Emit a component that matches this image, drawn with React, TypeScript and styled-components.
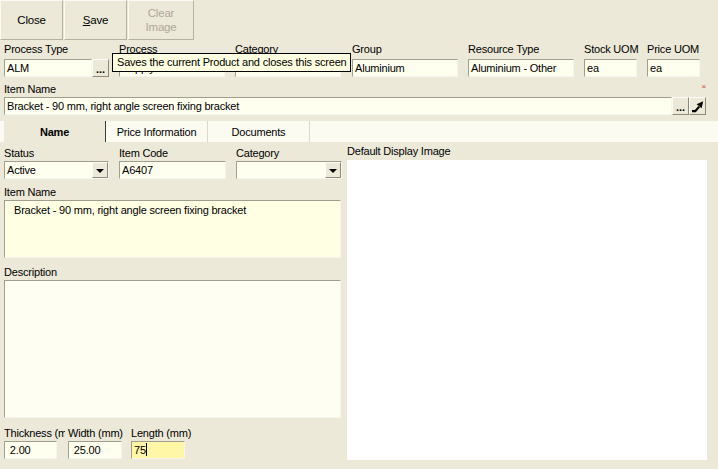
import React from "react";
import styled, { createGlobalStyle } from "styled-components";

const Global = createGlobalStyle`
  html, body { margin: 0; padding: 0; background: #ECE9D8; }
  body {
    font-family: "Liberation Sans", Arial, sans-serif;
    font-size: 11px;
    letter-spacing: -0.2px;
    color: #000;
  }
`;

const Page = styled.div`
  width: 718px;
  height: 469px;
  overflow: hidden;
  background: #ECE9D8;
  display: flex;
  flex-direction: column;
`;

const Toolbar = styled.div`
  display: flex;
  gap: 1px;
  height: 40px;
`;

const ToolButton = styled.div<{ $w: number; $disabled?: boolean }>`
  width: ${(p) => p.$w}px;
  height: 40px;
  box-sizing: border-box;
  border: 1px solid;
  border-color: #fbfaf6 #b5b1a1 #b5b1a1 #fbfaf6;
  display: flex;
  align-items: center;
  justify-content: center;
  text-align: center;
  line-height: 14px;
  font-size: 11.5px;
  color: ${(p) => (p.$disabled ? "#aca899" : "#000")};
`;

const HeaderRow = styled.div`
  position: relative;
  display: flex;
  gap: 10px;
  padding: 2px 0 0 4px;
`;

const Field = styled.div<{ $w: number; $ml?: number }>`
  width: ${(p) => p.$w}px;
  margin-left: ${(p) => p.$ml || 0}px;
  display: flex;
  flex-direction: column;
  flex-shrink: 0;
`;

const Label = styled.div<{ $clip?: boolean }>`
  height: 15px;
  line-height: 15px;
  white-space: nowrap;
  overflow: ${(p) => (p.$clip ? "hidden" : "visible")};
  ${(p) => (p.$clip ? "width: calc(100% - 3px);" : "")}
`;

const LabelTop = styled(Label)`
  margin-bottom: 2px;
`;

const TextBox = styled.div<{ $w?: number; $bg?: string }>`
  box-sizing: border-box;
  height: 18px;
  ${(p) => (p.$w ? `width: ${p.$w}px;` : "flex: 1;")}
  min-width: 0;
  background: ${(p) => p.$bg || "#FFFFF0"};
  border: 1px solid;
  border-color: #a19e8f #f6f5ef #f6f5ef #a19e8f;
  padding: 0 2px;
  line-height: 16px;
  white-space: nowrap;
  overflow: hidden;
`;

const InputGroup = styled.div`
  display: flex;
  height: 18px;
`;

const SideButton = styled.div<{ $icon?: boolean }>`
  box-sizing: border-box;
  width: 17px;
  height: 18px;
  flex-shrink: 0;
  background: #ECE9D8;
  border: 1px solid;
  border-color: #fdfcf8 #8d8a7c #8d8a7c #fdfcf8;
  display: flex;
  align-items: center;
  justify-content: center;
  font-weight: bold;
  font-size: 11px;
  letter-spacing: 0;
  line-height: 1;
  padding-top: ${(p) => (p.$icon ? 0 : 2)}px;
`;

const Tooltip = styled.div`
  position: absolute;
  left: 112px;
  top: 13px;
  box-sizing: border-box;
  height: 19px;
  line-height: 17px;
  padding: 0 4px;
  border: 1px solid #000;
  background: #FFFFE1;
  white-space: nowrap;
  z-index: 5;
`;

const NameBlock = styled.div`
  display: flex;
  flex-direction: column;
  padding: 5px 12px 0 4px;
`;

const LabelRow = styled.div`
  display: flex;
  justify-content: space-between;
  align-items: flex-start;
  height: 15px;
  line-height: 15px;
`;

const Required = styled.span`
  color: #d43c3c;
  font-size: 8px;
  line-height: 8px;
  margin: 1px 0 0;
`;

const TabStrip = styled.div`
  margin-top: 6px;
  height: 21px;
  background: #FCFBF1;
  display: flex;
  padding-left: 4px;
`;

const Tab = styled.div<{ $active?: boolean }>`
  box-sizing: border-box;
  width: 102px;
  height: 21px;
  display: flex;
  align-items: center;
  justify-content: center;
  background: ${(p) => (p.$active ? "#ECE9D8" : "transparent")};
  font-weight: ${(p) => (p.$active ? "bold" : "normal")};
  border-right: 1px solid ${(p) => (p.$active ? "#3c3c3c" : "#ddd9c8")};
  padding-top: 1px;
`;

const TabBody = styled.div`
  display: flex;
  gap: 6px;
  padding: 2px 0 0 4px;
`;

const LeftCol = styled.div`
  width: 337px;
  display: flex;
  flex-direction: column;
  padding-top: 2px;
`;

const FieldRow = styled.div<{ $mt?: number; $gap?: number }>`
  display: flex;
  gap: ${(p) => p.$gap ?? 10}px;
  margin-top: ${(p) => p.$mt || 0}px;
`;

const Combo = styled.div<{ $w: number }>`
  box-sizing: border-box;
  width: ${(p) => p.$w}px;
  height: 18px;
  display: flex;
  align-items: center;
  background: #FFFFF0;
  border: 1px solid;
  border-color: #a19e8f #f6f5ef #f6f5ef #a19e8f;
`;

const ComboText = styled.div`
  flex: 1;
  padding-left: 2px;
  line-height: 16px;
  white-space: nowrap;
  overflow: hidden;
`;

const DropButton = styled.div`
  box-sizing: border-box;
  width: 16px;
  height: 16px;
  background: #ECE9D8;
  border: 1px solid;
  border-color: #fdfcf8 #8d8a7c #8d8a7c #fdfcf8;
  display: flex;
  align-items: center;
  justify-content: center;
  &::after {
    content: "";
    border-left: 4px solid transparent;
    border-right: 4px solid transparent;
    border-top: 4px solid #000;
    margin-top: 1px;
  }
`;

const BlockLabel = styled(Label)<{ $mt: number }>`
  margin-top: ${(p) => p.$mt}px;
`;

const TextArea = styled.div<{ $h: number; $bg: string }>`
  box-sizing: border-box;
  height: ${(p) => p.$h}px;
  background: ${(p) => p.$bg};
  border: 1px solid;
  border-color: #a19e8f #f6f5ef #f6f5ef #a19e8f;
  padding: 2px 9px;
  line-height: 14px;
`;

const RightCol = styled.div`
  width: 360px;
  display: flex;
  flex-direction: column;
`;

const ImageBox = styled.div`
  height: 300px;
  background: #fff;
  margin-top: 1px;
`;

const Caret = styled.span`
  display: inline-block;
  width: 1px;
  height: 13px;
  background: #000;
  vertical-align: -2px;
`;

const ArrowIcon = () => (
  <svg width="13" height="13" viewBox="0 0 13 13">
    <path
      d="M1 11.2 L4.2 11.2 L8.2 6.6"
      stroke="#000"
      strokeWidth="2.2"
      fill="none"
      strokeLinejoin="round"
    />
    <polygon points="5.6,4.2 12.2,1.2 10.6,8.2" fill="#000" />
  </svg>
);

export default function App() {
  return (
    <Page>
      <Global />
      <Toolbar>
        <ToolButton $w={63}>Close</ToolButton>
        <ToolButton $w={63}>
          <span>
            <u>S</u>ave
          </span>
        </ToolButton>
        <ToolButton $w={66} $disabled>
          Clear
          <br />
          Image
        </ToolButton>
      </Toolbar>

      <HeaderRow>
        <Field $w={105}>
          <LabelTop>Process Type</LabelTop>
          <InputGroup>
            <TextBox>ALM</TextBox>
            <SideButton>...</SideButton>
          </InputGroup>
        </Field>
        <Field $w={106}>
          <LabelTop>Process</LabelTop>
          <TextBox>Supply</TextBox>
        </Field>
        <Field $w={106}>
          <LabelTop>Category</LabelTop>
          <TextBox />
        </Field>
        <Field $w={106} $ml={1}>
          <LabelTop>Group</LabelTop>
          <TextBox>Aluminium</TextBox>
        </Field>
        <Field $w={106}>
          <LabelTop>Resource Type</LabelTop>
          <TextBox>Aluminium - Other</TextBox>
        </Field>
        <Field $w={53}>
          <LabelTop>Stock UOM</LabelTop>
          <TextBox>ea</TextBox>
        </Field>
        <Field $w={53}>
          <LabelTop>Price UOM</LabelTop>
          <TextBox>ea</TextBox>
        </Field>
        <Tooltip>Saves the current Product and closes this screen</Tooltip>
      </HeaderRow>

      <NameBlock>
        <LabelRow>
          <span>Item Name</span>
          <Required>×</Required>
        </LabelRow>
        <InputGroup>
          <TextBox>Bracket - 90 mm, right angle screen fixing bracket</TextBox>
          <SideButton>...</SideButton>
          <SideButton $icon>
            <ArrowIcon />
          </SideButton>
        </InputGroup>
      </NameBlock>

      <TabStrip>
        <Tab $active>Name</Tab>
        <Tab>Price Information</Tab>
        <Tab>Documents</Tab>
      </TabStrip>

      <TabBody>
        <LeftCol>
          <FieldRow>
            <Field $w={105}>
              <Label>Status</Label>
              <Combo $w={105}>
                <ComboText>Active</ComboText>
                <DropButton />
              </Combo>
            </Field>
            <Field $w={107}>
              <Label>Item Code</Label>
              <TextBox>A6407</TextBox>
            </Field>
            <Field $w={106}>
              <Label>Category</Label>
              <Combo $w={106}>
                <ComboText />
                <DropButton />
              </Combo>
            </Field>
          </FieldRow>

          <BlockLabel $mt={6}>Item Name</BlockLabel>
          <TextArea $h={58} $bg="#FFFFE4">
            Bracket - 90 mm, right angle screen fixing bracket
          </TextArea>

          <BlockLabel $mt={7}>Description</BlockLabel>
          <TextArea $h={138} $bg="#FEFEF2" />

          <FieldRow $mt={8} $gap={0}>
            <Field $w={64}>
              <Label $clip>Thickness (mm)</Label>
              <TextBox $w={53}>&nbsp;2.00</TextBox>
            </Field>
            <Field $w={63}>
              <Label>Width (mm)</Label>
              <TextBox $w={54}>&nbsp;25.00</TextBox>
            </Field>
            <Field $w={64}>
              <Label>Length (mm)</Label>
              <TextBox $w={54} $bg="#FFF7A6">
                75
                <Caret />
              </TextBox>
            </Field>
          </FieldRow>
        </LeftCol>

        <RightCol>
          <Label>Default Display Image</Label>
          <ImageBox />
        </RightCol>
      </TabBody>
    </Page>
  );
}
